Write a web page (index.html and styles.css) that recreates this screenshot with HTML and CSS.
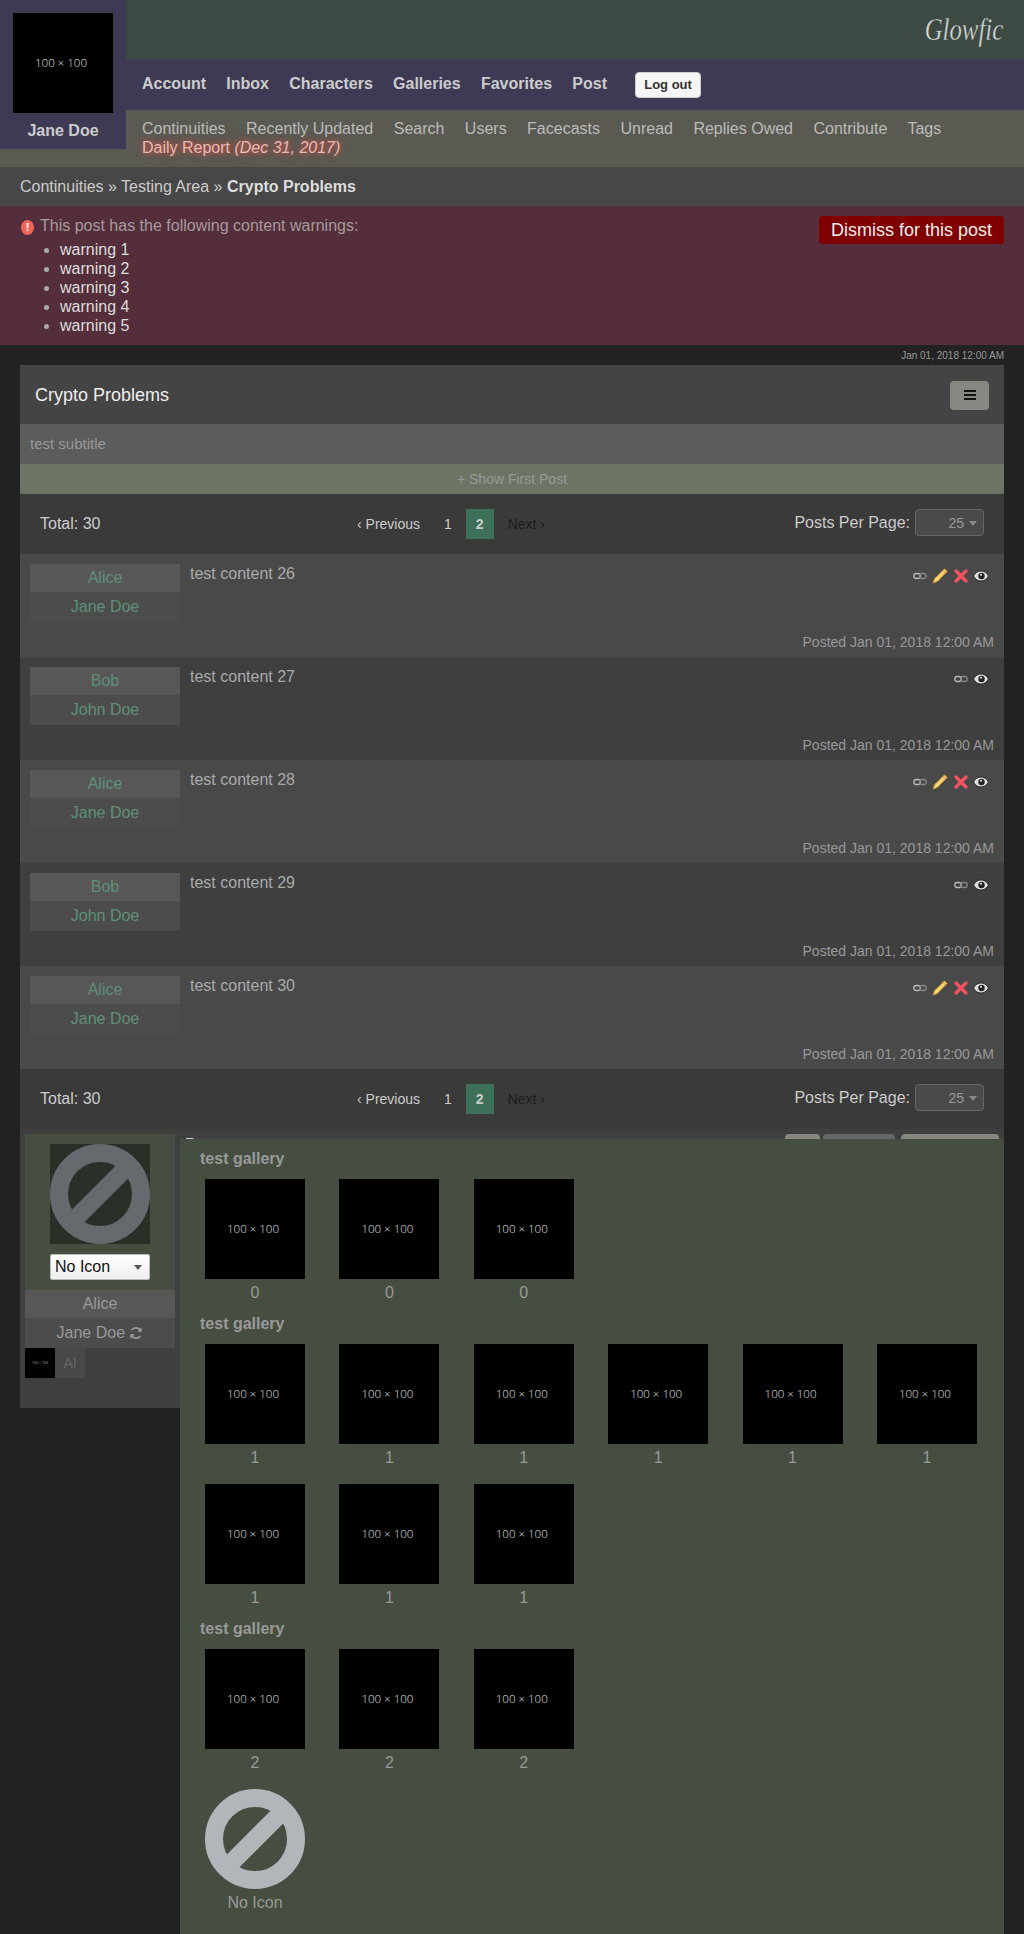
FILE: index.html
```html
<!DOCTYPE html>
<html lang="en">
<head>
    <meta charset="UTF-8">
    <meta name="viewport" content="width=device-width, initial-scale=1.0">
    <title>Crypto Problems | Glowfic</title>
    <link rel="stylesheet" href="styles.css">
</head>
<body>
    <svg class="icon-defs" width="0" height="0">
      <symbol id="i-link" viewBox="0 0 16 16">
        <rect x="1.800" y="5.500" width="6.500" height="5" rx="2.500" fill="none" stroke="#bbb" stroke-width="1.300"/>
        <rect x="7.700" y="5.500" width="6.500" height="5" rx="2.500" fill="none" stroke="#888" stroke-width="1.300"/>
      </symbol>
      <symbol id="i-pencil" viewBox="0 0 16 16">
        <path d="M12.500 .8l2.700 2.700L5 13.700l-4 1.500 1.300-4.200z" fill="#f6d66e" stroke="#b9832a" stroke-width="1"/>
        <path d="M4 9.500l2.700 2.700" stroke="#fff0b0" stroke-width="1"/>
        <path d="M11 2.500l2.700 2.700" stroke="#e8a070" stroke-width="1.200"/>
      </symbol>
      <symbol id="i-cross" viewBox="0 0 16 16">
        <path d="M3 3l10 10M13 3L3 13" stroke="#f4525e" stroke-width="3.400" stroke-linecap="round"/>
      </symbol>
      <symbol id="i-eye" viewBox="0 0 16 16">
        <path d="M.5 8C3 4 5.500 3 8 3s5 1 7.500 5C13 12 10.500 13 8 13S3 12 .5 8z" fill="#ddd" stroke="#222" stroke-width="1"/>
        <circle cx="8.500" cy="8" r="3.200" fill="#222"/>
        <circle cx="8" cy="6.800" r="1" fill="#eee"/>
      </symbol>
      <symbol id="i-none" viewBox="0 0 100 100">
        <circle cx="50" cy="50" r="41" fill="none" stroke="currentColor" stroke-width="18"/>
        <path d="M22 78L78 22" stroke="currentColor" stroke-width="18"/>
      </symbol>
    </svg>

    <div id="header">
      <div id="user-box">
        <div class="placeholder avatar">100 × 100</div>
        <div id="user-name">Jane Doe</div>
      </div>
      <div id="logo-bar"><span id="logo">Glowfic</span></div>
      <div id="main-nav">
        <a>Account</a><a>Inbox</a><a>Characters</a><a>Galleries</a><a>Favorites</a><a>Post</a>
        <span id="logout">Log out</span>
      </div>
      <div id="sub-nav">
        <a>Continuities</a> <a>Recently Updated</a> <a>Search</a> <a>Users</a> <a>Facecasts</a> <a>Unread</a> <a>Replies Owed</a> <a>Contribute</a> <a>Tags</a>
        <a id="daily">Daily Report <em>(Dec 31, 2017)</em></a>
      </div>
    </div>

    <div id="breadcrumbs">Continuities » Testing Area » <b>Crypto Problems</b></div>

    <div id="warnings">
      <span id="dismiss">Dismiss for this post</span>
      <div id="warning-title"><span id="warning-icon">!</span>This post has the following content warnings:</div>
      <ul>
        <li>warning 1</li>
        <li>warning 2</li>
        <li>warning 3</li>
        <li>warning 4</li>
        <li>warning 5</li>
      </ul>
    </div>

    <div id="content">
      <div id="timestamp">Jan 01, 2018 12:00 AM</div>

      <div id="post-title">
        <span>Crypto Problems</span>
        <span id="menu-button"><i></i><i></i><i></i></span>
      </div>
      <div id="subtitle">test subtitle</div>
      <div id="show-first">+ Show First Post</div>

      <div class="pagination">
        <div>Total: 30</div>
        <div class="pages">
          <a>‹ Previous</a><a>1</a><a class="current">2</a><a class="disabled">Next ›</a>
        </div>
        <div class="per-page">Posts Per Page: <span class="per-select">25</span></div>
      </div>

      <div class="post odd">
        <div class="post-info"><div class="char-name">Alice</div><div class="screen-name">Jane Doe</div></div>
        <div class="post-body">
          <div class="post-top">
            <div>test content 26</div>
            <div class="post-icons">
              <svg><use href="#i-link"/></svg><svg><use href="#i-pencil"/></svg><svg><use href="#i-cross"/></svg><svg><use href="#i-eye"/></svg>
            </div>
          </div>
          <div class="posted">Posted Jan 01, 2018 12:00 AM</div>
        </div>
      </div>
      <div class="post even">
        <div class="post-info"><div class="char-name">Bob</div><div class="screen-name">John Doe</div></div>
        <div class="post-body">
          <div class="post-top">
            <div>test content 27</div>
            <div class="post-icons">
              <svg><use href="#i-link"/></svg><svg><use href="#i-eye"/></svg>
            </div>
          </div>
          <div class="posted">Posted Jan 01, 2018 12:00 AM</div>
        </div>
      </div>
      <div class="post odd">
        <div class="post-info"><div class="char-name">Alice</div><div class="screen-name">Jane Doe</div></div>
        <div class="post-body">
          <div class="post-top">
            <div>test content 28</div>
            <div class="post-icons">
              <svg><use href="#i-link"/></svg><svg><use href="#i-pencil"/></svg><svg><use href="#i-cross"/></svg><svg><use href="#i-eye"/></svg>
            </div>
          </div>
          <div class="posted">Posted Jan 01, 2018 12:00 AM</div>
        </div>
      </div>
      <div class="post even">
        <div class="post-info"><div class="char-name">Bob</div><div class="screen-name">John Doe</div></div>
        <div class="post-body">
          <div class="post-top">
            <div>test content 29</div>
            <div class="post-icons">
              <svg><use href="#i-link"/></svg><svg><use href="#i-eye"/></svg>
            </div>
          </div>
          <div class="posted">Posted Jan 01, 2018 12:00 AM</div>
        </div>
      </div>
      <div class="post odd">
        <div class="post-info"><div class="char-name">Alice</div><div class="screen-name">Jane Doe</div></div>
        <div class="post-body">
          <div class="post-top">
            <div>test content 30</div>
            <div class="post-icons">
              <svg><use href="#i-link"/></svg><svg><use href="#i-pencil"/></svg><svg><use href="#i-cross"/></svg><svg><use href="#i-eye"/></svg>
            </div>
          </div>
          <div class="posted">Posted Jan 01, 2018 12:00 AM</div>
        </div>
      </div>

      <div class="pagination">
        <div>Total: 30</div>
        <div class="pages">
          <a>‹ Previous</a><a>1</a><a class="current">2</a><a class="disabled">Next ›</a>
        </div>
        <div class="per-page">Posts Per Page: <span class="per-select">25</span></div>
      </div>

      <div id="editor">
        <div id="editor-side">
          <div id="icon-box">
            <svg class="no-icon"><use href="#i-none"/></svg>
            <span id="icon-select">No Icon</span>
          </div>
          <div class="char-name">Alice</div>
          <div class="screen-name">Jane Doe
            <svg class="swap" viewBox="0 0 16 16"><path d="M13.500 6A6 6 0 0 0 3 4.500M2.500 10A6 6 0 0 0 13 11.500" fill="none" stroke="currentColor" stroke-width="2"/><path d="M14.500 1.500v5h-5zM1.500 14.500v-5h5z" fill="currentColor"/></svg>
          </div>
          <div id="recent-icons">
            <div class="placeholder tiny">100 × 100</div>
            <div id="ai-tab">AI</div>
          </div>
        </div>
        <div id="editor-main">
          <span class="editor-title">Post</span>
          <span class="editor-buttons"><i class="b1"></i><i class="b2"></i><i class="b3"></i></span>
        </div>
      </div>
    </div>

    <!-- icon picker sits on top of the editor -->
    <div id="gallery-picker">
      <div class="gallery-name">test gallery</div>
      <div class="gallery">
        <div class="gallery-icon"><div class="placeholder">100 × 100</div>0</div>
        <div class="gallery-icon"><div class="placeholder">100 × 100</div>0</div>
        <div class="gallery-icon"><div class="placeholder">100 × 100</div>0</div>
      </div>
      <div class="gallery-name">test gallery</div>
      <div class="gallery">
        <div class="gallery-icon"><div class="placeholder">100 × 100</div>1</div>
        <div class="gallery-icon"><div class="placeholder">100 × 100</div>1</div>
        <div class="gallery-icon"><div class="placeholder">100 × 100</div>1</div>
        <div class="gallery-icon"><div class="placeholder">100 × 100</div>1</div>
        <div class="gallery-icon"><div class="placeholder">100 × 100</div>1</div>
        <div class="gallery-icon"><div class="placeholder">100 × 100</div>1</div>
        <div class="gallery-icon"><div class="placeholder">100 × 100</div>1</div>
        <div class="gallery-icon"><div class="placeholder">100 × 100</div>1</div>
        <div class="gallery-icon"><div class="placeholder">100 × 100</div>1</div>
      </div>
      <div class="gallery-name">test gallery</div>
      <div class="gallery">
        <div class="gallery-icon"><div class="placeholder">100 × 100</div>2</div>
        <div class="gallery-icon"><div class="placeholder">100 × 100</div>2</div>
        <div class="gallery-icon"><div class="placeholder">100 × 100</div>2</div>
        <div class="gallery-icon no-icon-item"><svg class="picker-none"><use href="#i-none"/></svg>No Icon</div>
      </div>
    </div>
</body>
</html>
```
FILE: styles.css
```css
html {
    height: 1934px;
    overflow: hidden;
}
body {
    position: relative;
    margin: 0;
    height: 1934px;
    overflow: hidden;
    background-color: #222;
    color: #aaa;
    font-family: "Liberation Sans", Arial, sans-serif;
    font-size: 16px;
    line-height: 18px;
}
.icon-defs {
    position: absolute;
}
.placeholder {
    display: flex;
    align-items: center;
    justify-content: center;
    width: 100px;
    height: 100px;
    padding-right: 4px;
    box-sizing: border-box;
    background-color: #000;
    color: #e0e0e0;
    font-family: "Open Sans", sans-serif;
    font-size: 11.5px;
    font-weight: 300;
}

/* Header */
#header {
    height: 167px;
    background-color: #5a5a52;
}
#user-box {
    float: left;
    width: 126px;
    height: 149px;
    padding: 13px 0 0 13px;
    box-sizing: border-box;
    background-color: #3f3a54;
}
#user-name {
    width: 100px;
    margin-top: 9px;
    text-align: center;
    font-weight: bold;
    color: #ccc;
}
#logo-bar {
    height: 59px;
    padding-right: 21px;
    box-sizing: border-box;
    background-color: #3d4a43;
    text-align: right;
}
#logo {
    display: inline-block;
    padding-top: 15px;
    font-family: "Liberation Serif", serif;
    font-style: italic;
    font-size: 31px;
    line-height: 30px;
    color: #d8dcd8;
    -webkit-text-stroke: 0.4px #3d4a43;
    transform: scaleX(0.8);
    transform-origin: right center;
}
#main-nav {
    display: flex;
    align-items: center;
    gap: 20.250px;
    height: 51px;
    padding: 0 0 2px 16px;
    box-sizing: border-box;
    background-color: #3f3a54;
    font-weight: bold;
    color: #ccc;
}
#logout {
    margin: 2px 0 0 8px;
    padding: 5px 8px;
    border: 1px solid #ccc;
    border-radius: 4px;
    background-color: #f6f6f6;
    color: #333;
    font-size: 13px;
    line-height: 14px;
}
#sub-nav {
    padding: 9px 60px 0 142px;
    color: #bbb;
    line-height: 19px;
}
#sub-nav a {
    margin-right: 16px;
}
#daily {
    display: block;
    width: fit-content;
    color: #e4bcb2;
    text-shadow: 0 0 5px #c0504d, 0 0 8px #c0504d;
}
#breadcrumbs {
    height: 39px;
    padding-left: 20px;
    background-color: #474747;
    color: #ccc;
    line-height: 39px;
}
#breadcrumbs b {
    color: #ddd;
}

/* Content warnings */
#warnings {
    height: 139px;
    padding: 10px 20px 0;
    box-sizing: border-box;
    background-color: #542e3a;
}
#dismiss {
    float: right;
    padding: 0 12px;
    border-radius: 4px;
    background-color: #800000;
    color: #eee;
    font-size: 18px;
    line-height: 28px;
}
#warning-title {
    height: 19px;
    line-height: 20px;
    color: #a59a9d;
}
#warning-icon {
    display: inline-block;
    width: 13px;
    height: 15px;
    margin: 0 6px 0 1px;
    border-radius: 50%;
    background-color: #f0645a;
    color: #fff;
    font-size: 11px;
    font-weight: bold;
    line-height: 15px;
    text-align: center;
}
#warnings ul {
    margin: 5px 0 0;
    padding-left: 40px;
    color: #ddd;
    line-height: 19px;
}
#warnings li::marker {
    color: #aaa;
}

/* Post list */
#content {
    padding: 0 20px;
}
#timestamp {
    height: 20px;
    text-align: right;
    font-size: 10px;
    line-height: 22px;
    color: #999;
}
#post-title {
    display: flex;
    align-items: center;
    justify-content: space-between;
    height: 59px;
    padding: 0 15px;
    background-color: #444;
    color: #eee;
    font-size: 18px;
}
#menu-button {
    display: flex;
    flex-direction: column;
    justify-content: center;
    gap: 2px;
    width: 39px;
    height: 29px;
    margin-top: 1px;
    padding: 0 13.500px;
    box-sizing: border-box;
    border-radius: 4px;
    background-color: #878681;
}
#menu-button i {
    height: 2px;
    background-color: #111;
}
#subtitle {
    height: 40px;
    padding-left: 10px;
    background-color: #5c5c5c;
    color: #999;
    font-size: 15px;
    line-height: 40px;
}
#show-first {
    height: 30px;
    background-color: #6c7565;
    color: #999;
    font-size: 14px;
    line-height: 30px;
    text-align: center;
}
.pagination {
    display: grid;
    grid-template-columns: 317px auto 1fr;
    align-items: center;
    height: 60px;
    padding: 0 20px;
    background-color: #3a3a3a;
    color: #ccc;
}
.pages {
    display: flex;
    font-size: 14px;
    line-height: 30px;
}
.pages a {
    margin: 0 2px;
    padding: 0 10px;
}
.pages a:first-child {
    margin-left: 0;
    padding-left: 0;
}
.pages .current {
    background-color: #3d7058;
    font-weight: bold;
}
.pages .disabled {
    color: #1c1c1c;
}
.per-page {
    display: flex;
    align-items: center;
    justify-content: flex-end;
    gap: 5px;
    margin-top: -3px;
}
.per-select {
    position: relative;
    width: 69px;
    height: 27px;
    padding-right: 19px;
    box-sizing: border-box;
    border: 1px solid #666;
    border-radius: 4px;
    background-color: #4a4a4a;
    color: #999;
    font-size: 14px;
    line-height: 27px;
    text-align: right;
}
.per-select::after {
    content: "";
    position: absolute;
    top: 11px;
    right: 6px;
    border: 4px solid transparent;
    border-top: 5px solid #888;
    border-bottom: 0;
}
.post {
    display: flex;
    height: 103px;
    padding: 10px 10px 7px;
    box-sizing: border-box;
}
.post.odd {
    background-color: #494949;
}
.post.even {
    background-color: #3f3f3f;
}
.post-info {
    width: 150px;
    margin-right: 10px;
    text-align: center;
    color: #5f9077;
}
.char-name {
    height: 28px;
    background-color: #575757;
    line-height: 28px;
}
.screen-name {
    height: 30px;
    background-color: #4c4c4c;
    line-height: 30px;
}
.post-body {
    display: flex;
    flex: 1;
    flex-direction: column;
    justify-content: space-between;
}
.post-top {
    display: flex;
    justify-content: space-between;
    padding-top: 1px;
}
.post-icons {
    display: flex;
    gap: 4.500px;
    margin: 3px 5px 0 0;
}
.post-icons svg {
    width: 16px;
    height: 16px;
}
.posted {
    text-align: right;
    font-size: 14px;
    line-height: 16px;
    color: #999;
}

/* Reply editor */
#editor {
    display: flex;
    height: 279px;
    padding: 5px 5px 0;
    box-sizing: border-box;
    background-color: #3f3f3f;
}
#editor-side {
    width: 150px;
    text-align: center;
    color: #999;
}
#icon-box {
    display: flex;
    flex-direction: column;
    align-items: center;
    height: 156px;
    padding-top: 10px;
    box-sizing: border-box;
    background-color: #464e41;
}
.no-icon {
    width: 100px;
    height: 100px;
    background-color: #293028;
    color: #646a6e;
}
#icon-select {
    position: relative;
    width: 100px;
    height: 26px;
    margin-top: 10px;
    padding-left: 4px;
    box-sizing: border-box;
    border: 1px solid #bbb;
    border-radius: 2px;
    background: linear-gradient(#fff, #eee);
    color: #111;
    line-height: 24px;
    text-align: left;
}
#icon-select::after {
    content: "";
    position: absolute;
    top: 10px;
    right: 7px;
    border: 4px solid transparent;
    border-top: 5px solid #555;
    border-bottom: 0;
}
.swap {
    width: 14px;
    height: 14px;
    vertical-align: -2px;
}
#recent-icons {
    display: flex;
}
.placeholder.tiny {
    width: 30px;
    height: 30px;
    padding-right: 0;
    font-size: 3.500px;
}
#ai-tab {
    width: 30px;
    height: 30px;
    background-color: #484848;
    color: #666;
    font-size: 14px;
    line-height: 30px;
}
#editor-main {
    display: flex;
    flex: 1;
    justify-content: space-between;
    height: 30px;
    margin-left: 5px;
    padding: 2px 0 0 5px;
    color: #ccc;
    font-weight: bold;
}
.editor-buttons {
    display: flex;
    gap: 3px;
    margin-top: -2px;
}
.editor-buttons i {
    height: 26px;
    border-radius: 4px;
    background-color: #878681;
}
.editor-buttons .b1 { width: 35px; }
.editor-buttons .b2 { width: 72px; background-color: #666; }
.editor-buttons .b3 { width: 98px; margin-left: 3px; }

/* Gallery picker */
#gallery-picker {
    position: absolute;
    top: 1139px;
    left: 180px;
    width: 824px;
    height: 795px;
    padding-top: 11px;
    box-sizing: border-box;
    background-color: #464e41;
    color: #999;
}
.gallery-name {
    height: 19px;
    padding-left: 20px;
    margin-bottom: 10px;
    font-weight: bold;
    line-height: 18px;
}
.gallery {
    display: grid;
    grid-template-columns: repeat(6, 134.4px);
    grid-auto-rows: 140px;
    padding-left: 7.800px;
}
.gallery + .gallery-name {
    margin-top: -4px;
}
.gallery-icon {
    display: flex;
    flex-direction: column;
    align-items: center;
    line-height: 28px;
}
.no-icon-item {
    grid-column-start: 1;
}
.picker-none {
    width: 100px;
    height: 100px;
    color: #b0b6ba;
}
```
